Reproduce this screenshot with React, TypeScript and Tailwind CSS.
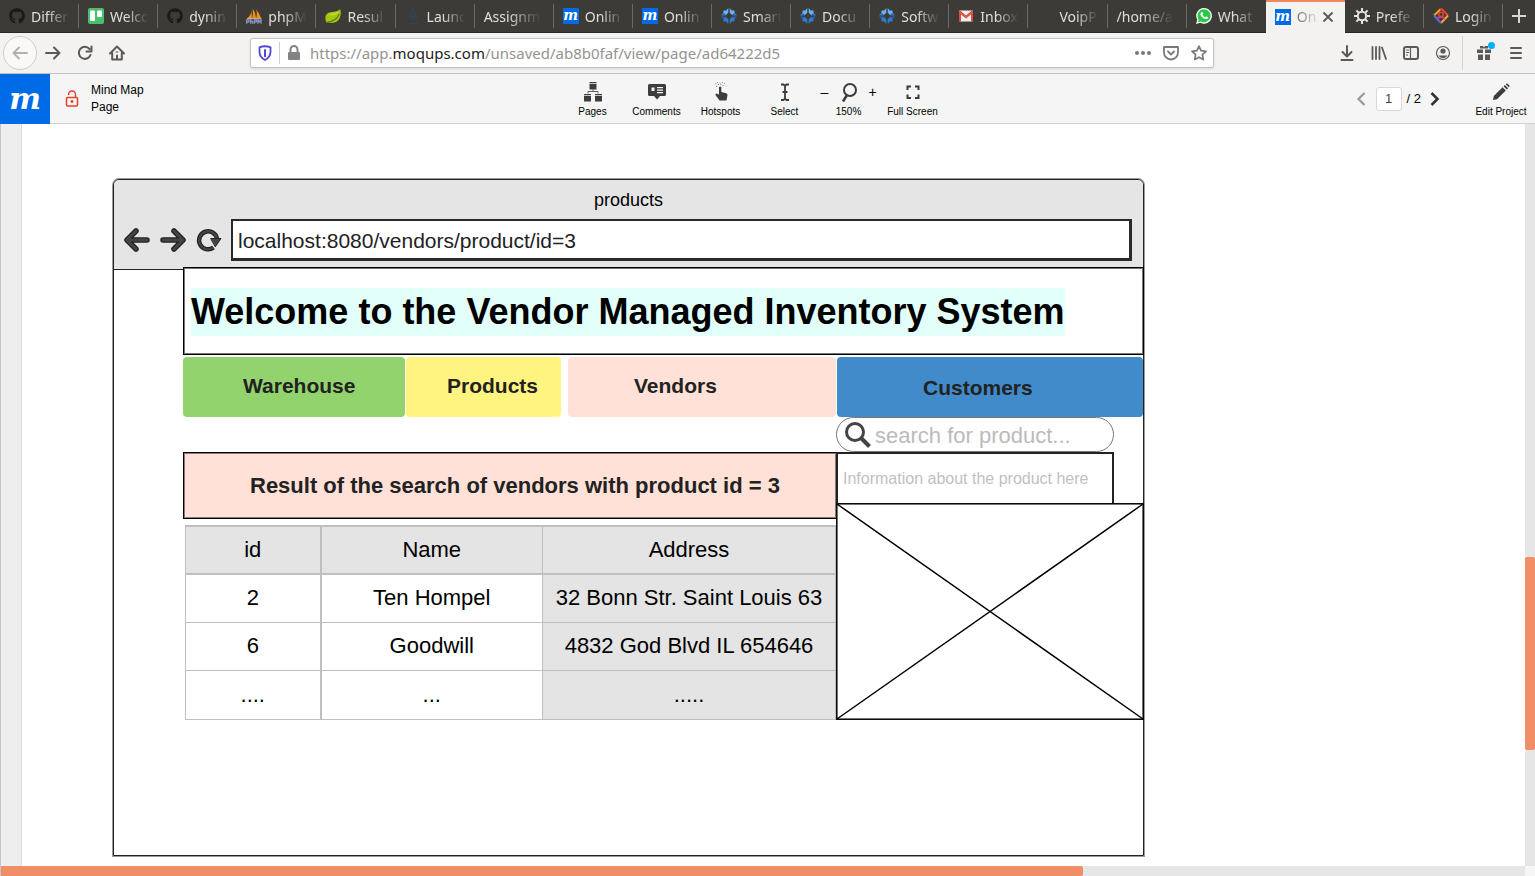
import type { ReactNode } from "react";
import { FaGithub } from "react-icons/fa";

type Kids = { children: ReactNode };

/* ---------- tab icons ---------- */

function MoqupsIcon() {
  return (
    <span className="flex size-4 items-center justify-center bg-[#006be6] pb-[2px] font-['DejaVu_Serif',serif] text-[14px] leading-none font-bold text-white italic">
      m
    </span>
  );
}

function TrelloIcon() {
  return (
    <svg viewBox="0 0 16 16" className="size-4">
      <rect width="16" height="16" rx="2" fill="#4bbf6b" />
      <rect x="2" y="2.5" width="5" height="10.5" rx="1" fill="#fff" />
      <rect x="9" y="2.5" width="5" height="6.5" rx="1" fill="#fff" />
    </svg>
  );
}

function PhpMyAdminIcon() {
  return (
    <svg viewBox="0 0 16 16" className="size-4">
      <path d="M1.500 10Q5 7 5.500 2.500L6 10zM6.300 10Q7.500 4 6.500.5 9.500 4 10 10zM10.300 10Q11.500 5 10 1.500q3.500 3.500 5 8.500z" fill="#f29111" />
      <path d="M1 10.700h14" stroke="#c9c9d8" strokeWidth="1" />
      <path d="M.7 15.800v-4h2.300v2H.7M4.700 11v4.800M4.700 13.500h2v2.300M8.500 15.800v-4h2v2h-2M12 15.800v-4l1.500 2 1.500-2v4" fill="none" stroke="#8f93bd" strokeWidth="1.300" />
    </svg>
  );
}

function SpringIcon() {
  return (
    <svg viewBox="0 0 16 16" className="size-4">
      <path d="M15.200 1C16.500 6 15.500 12 11 14c-3 1.300-6.500 1.200-9.500.5C-.5 11 0 6 4 4.600 8 3.200 12.500 4.300 15.200 1z" fill="#a3c614" />
      <path d="M1.500 14.300C7 14 12 11.500 14.300 6" stroke="#5f7d0d" fill="none" strokeWidth="1.200" />
      <path d="M3 7c3-2 8-1 11-4-1 4-6 5-11 4z" fill="#c3dc34" />
    </svg>
  );
}

function RocketIcon() {
  return (
    <svg viewBox="0 0 16 16" className="size-4" fill="none" stroke="#34455a" strokeWidth="1.200">
      <path d="M8 .8C6 2.500 5.500 5 5.800 8.500h4.400C10.500 5 10 2.500 8 .8zM5.600 6.500 4 9.500l2 .5M10.400 6.500 12 9.500l-2 .5M8 9v3M4 15.300h8" />
      <circle cx="8" cy="5" r="1" />
    </svg>
  );
}

function CompassIcon() {
  return (
    <svg viewBox="0 0 16 16" className="size-4">
      <path d="M7.300 0v4.700L4.700 7.300H0L2.500 5.200V2.500h2.700zM8.700 0v4.700l2.600 2.600H16l-2.500-2.100V2.500h-2.700z" fill="#66b3fb" />
      <path d="M7.300 16v-4.700L4.700 8.700H0l2.500 2.100v2.700h2.700zM8.700 16v-4.700l2.600-2.600H16l-2.500 2.100v2.700h-2.700z" fill="#2f7dca" />
      <path d="M0 7.300h4.700L3.600 5.500zM16 7.300h-4.700l1.100-1.800zM0 8.700h4.700l-1.100 1.800zM16 8.700h-4.700l1.100 1.800z" fill="#1d5ca8" />
    </svg>
  );
}

function GmailIcon() {
  return (
    <svg viewBox="0 0 16 16" className="size-4">
      <rect x="1" y="2.500" width="14" height="11" rx="1" fill="#f1f1f1" />
      <path d="M1 13.500V3.500L8 9l7-5.500v10h-2V6.500L8 10.500l-5-4v7z" fill="#e04a3f" />
      <path d="M1 3.500 2 2.500 8 7.500l6-5 1 1L8 9z" fill="#d23f31" />
    </svg>
  );
}

function WhatsAppIcon() {
  return (
    <svg viewBox="0 0 16 16" className="size-4">
      <path d="M8.200 0a7.800 7.800 0 1 1-3.700 14.700L0 16l1.300-4.300A7.800 7.800 0 0 1 8.200 0z" fill="#fff" />
      <path d="M8.200 1.300a6.500 6.500 0 1 1-3.400 12.100l-2.900.8.8-2.800A6.500 6.500 0 0 1 8.200 1.300z" fill="#25c942" />
      <path d="M5.500 4.200c.5-.4 1-.3 1.200.2l.5 1.200c.1.400-.5.900-.6 1.200.6 1.200 1.500 2 2.700 2.500.4-.2.800-1 1.200-.8l1.400.7c.4.200.1 1.200-.3 1.600-.8.700-2 .5-3.200 0-1.800-.8-3.100-2.300-3.800-3.900-.4-1.100.1-2.100.9-2.700z" fill="#fff" />
    </svg>
  );
}

function GearIcon() {
  return (
    <svg viewBox="0 0 16 16" className="size-4" fill="none" stroke="#e6e3de">
      <circle cx="8" cy="8" r="4.200" strokeWidth="2" />
      <path d="M8 0v3.500M8 12.500V16M0 8h3.500M12.500 8H16M2.400 2.400l2.400 2.400M11.200 11.200l2.400 2.400M13.600 2.400l-2.400 2.400M4.800 11.200l-2.400 2.400" strokeWidth="2" />
    </svg>
  );
}

function LoginIcon() {
  return (
    <svg viewBox="0 0 16 16" className="size-4" fill="none" strokeWidth="2">
      <path d="M1 7.500 7.500 1.200" stroke="#f5a21b" />
      <path d="M7 1.200h2l6 6.300" stroke="#ee4035" />
      <path d="M15 7.500 8 15" stroke="#f7a52c" />
      <path d="M1 7.500 8 15" stroke="#4b6fe0" />
      <circle cx="8" cy="6.500" r="2.200" stroke="#ee4035" strokeWidth="1.500" />
      <path d="M5 11.500V9.700l3-1.200 3 1.200v1.800" stroke="#d8417d" strokeWidth="1.500" />
    </svg>
  );
}

const github = <FaGithub className="size-4 text-[#1b1a19]" />;

const tabs: { label: string; icon?: ReactNode; active?: boolean }[] = [
  { label: "Differ", icon: github },
  { label: "Welco", icon: <TrelloIcon /> },
  { label: "dynin", icon: github },
  { label: "phpM", icon: <PhpMyAdminIcon /> },
  { label: "Resul", icon: <SpringIcon /> },
  { label: "Launc", icon: <RocketIcon /> },
  { label: "Assignm" },
  { label: "Onlin", icon: <MoqupsIcon /> },
  { label: "Onlin", icon: <MoqupsIcon /> },
  { label: "Smart", icon: <CompassIcon /> },
  { label: "Docu", icon: <CompassIcon /> },
  { label: "Softw", icon: <CompassIcon /> },
  { label: "Inbox", icon: <GmailIcon /> },
  { label: "VoipP", icon: <span className="size-4" /> },
  { label: "/home/a" },
  { label: "What", icon: <WhatsAppIcon /> },
  { label: "On", icon: <MoqupsIcon />, active: true },
  { label: "Prefe", icon: <GearIcon /> },
  { label: "Login", icon: <LoginIcon /> },
];

function TabStrip() {
  return (
    <div className="flex h-[33px] shrink-0 border-b border-[#282724] bg-[#3c3b37] text-[14px] text-[#e2ded7]">
      {tabs.map((t, i) =>
        t.active ? (
          <div key={i} className="-mb-px min-w-0 flex-1">
            <div className="flex h-full items-center border-t-2 border-[#f0865c] bg-[#f4f2f1] pr-[11px] pb-[2px] pl-[9px] text-[#77736e]">
              <span className="shrink-0">{t.icon}</span>
              <span className="ml-[6px] min-w-0 flex-1 overflow-hidden whitespace-nowrap [mask-image:linear-gradient(to_right,black,transparent)]">
                {t.label}
              </span>
              <button aria-label="Close tab" className="shrink-0">
                <svg viewBox="0 0 12 12" className="size-3" stroke="#5a5855" strokeWidth="1.800" fill="none">
                  <path d="M1.500 1.500l9 9M10.500 1.500l-9 9" />
                </svg>
              </button>
            </div>
          </div>
        ) : (
          <div key={i} className="flex min-w-0 flex-1 items-center py-[5px]">
            <button className="flex min-w-0 flex-1 items-center gap-[6px] pr-[2px] pl-[9px] text-left">
              {t.icon && <span className="flex shrink-0">{t.icon}</span>}
              <span className="min-w-0 flex-1 overflow-hidden whitespace-nowrap [mask-image:linear-gradient(to_right,black_35%,transparent_85%)]">
                {t.label}
              </span>
            </button>
            {!tabs[i + 1]?.active && <span className="h-6 w-px bg-[#6b6a65]" />}
          </div>
        ),
      )}
      <button aria-label="New tab" className="flex w-8 items-center justify-center">
        <svg viewBox="0 0 16 16" className="size-4" stroke="#d9d6d0" strokeWidth="2">
          <path d="M8 1v14M1 8h14" />
        </svg>
      </button>
    </div>
  );
}

/* ---------- browser navigation bar ---------- */

function NavButton({ label, children }: Kids & { label: string }) {
  return (
    <button aria-label={label} className="flex size-8 shrink-0 items-center justify-center">
      <svg viewBox="0 0 16 16" className="size-4" fill="none" stroke="#5b5957" strokeWidth="2" strokeLinecap="round" strokeLinejoin="round">
        {children}
      </svg>
    </button>
  );
}

function NavigationBar() {
  return (
    <div className="flex h-[41px] shrink-0 items-center border-b border-[#c4c2c0] bg-[#f4f2f1]">
      <div className="flex w-[250px] shrink-0 items-center pl-[3px]">
        <button aria-label="Back" className="flex size-[34px] items-center justify-center rounded-full border border-[#cfcdcb] bg-[#f9f8f7]">
          <svg viewBox="0 0 16 16" className="size-4" fill="none" stroke="#b3b1af" strokeWidth="2" strokeLinecap="round" strokeLinejoin="round">
            <path d="M15 8H1.500M7 2.500 1.500 8 7 13.500" />
          </svg>
        </button>
        <NavButton label="Forward">
          <path d="M1 8h13.500M9 2.500 14.500 8 9 13.500" />
        </NavButton>
        <NavButton label="Reload">
          <path d="M13.500 10A6 6 0 1 1 12.500 4M14.500 1.500v5h-5" />
        </NavButton>
        <NavButton label="Home">
          <path d="M1 8.500 8 1.500l7 7M3.200 8v6.500h9.600V8M8 14v-3.500" />
          <path d="M7 7h2" strokeWidth="1" />
        </NavButton>
      </div>

      <div className="flex h-[30px] min-w-0 flex-1 items-center rounded-[3px] border border-[#c6c3c0] bg-white shadow-sm">
        <svg viewBox="0 0 16 16" className="ml-[6px] size-4 shrink-0" fill="none">
          <path d="M2.500 2.300Q8 .2 13.500 2.300V7c0 3.500-2 6-5.500 8-3.500-2-5.500-4.500-5.500-8z" stroke="#5348d6" strokeWidth="1.800" />
          <path d="M8 4.300v7.700" stroke="#5348d6" strokeWidth="2" />
        </svg>
        <span className="ml-[6px] h-[22px] w-px shrink-0 bg-[#cfcdcb]" />
        <svg viewBox="0 0 16 16" className="ml-[6px] size-4 shrink-0">
          <path d="M4.500 8V4.500a3.500 3.500 0 0 1 7 0V8" fill="none" stroke="#858381" strokeWidth="2" />
          <rect x="2" y="7" width="12" height="8" rx="1" fill="#858381" />
        </svg>
        <div className="ml-[8px] min-w-0 flex-1 truncate text-[15px] text-[#96938f]">
          https://app.<span className="text-[#1c1b1a]">moqups.com</span>/unsaved/ab8b0faf/view/page/ad64222d5
        </div>
        <div className="flex items-center gap-3 pr-[6px]">
          <button aria-label="Page actions">
            <svg viewBox="0 0 16 16" className="size-4" fill="#7b7977">
              <circle cx="2" cy="8" r="2" /><circle cx="8" cy="8" r="2" /><circle cx="14" cy="8" r="2" />
            </svg>
          </button>
          <button aria-label="Save to Pocket">
            <svg viewBox="0 0 16 16" className="size-4" fill="none" stroke="#7b7977" strokeWidth="1.800" strokeLinecap="round" strokeLinejoin="round">
              <path d="M1 2h14v5.500a7 7 0 0 1-14 0zM5 6.500l3 3 3-3" />
            </svg>
          </button>
          <button aria-label="Bookmark">
            <svg viewBox="0 0 16 16" className="size-4" fill="none" stroke="#7b7977" strokeWidth="1.700" strokeLinejoin="round">
              <path d="M8 1.200l2.100 4.500 4.900.6-3.600 3.400.9 4.900L8 12.200l-4.300 2.400.9-4.900L1 6.300l4.900-.6z" />
            </svg>
          </button>
        </div>
      </div>

      <div className="flex w-[321px] shrink-0 items-center justify-end pr-[3px]">
        <NavButton label="Downloads">
          <path d="M8 1v10M3.500 7 8 11.500 12.500 7M2.500 15h11" />
        </NavButton>
        <NavButton label="Library">
          <path d="M1.500 2v12M5 2v12M8.500 2v12M11 2.500l4 11.500" strokeWidth="1.800" />
        </NavButton>
        <NavButton label="Sidebars">
          <rect x="1" y="2" width="14" height="12" rx="2" />
          <path d="M7.500 2v12M3.500 5h2M3.500 7.500h2M3.500 10h1" strokeWidth="1.200" />
        </NavButton>
        <NavButton label="Account">
          <circle cx="8" cy="8" r="6.500" strokeWidth="1.200" />
          <circle cx="8" cy="6" r="2.600" fill="#5b5957" stroke="none" />
          <path d="M3.500 10.500h9A5.500 5.500 0 0 1 8 13.200a5.500 5.500 0 0 1-4.500-2.700z" fill="#5b5957" stroke="none" />
        </NavButton>
        <span className="mr-[5px] ml-[3px] h-[34px] w-px bg-[#d6d4d2]" />
        <button aria-label="What's new" className="relative flex size-8 items-center justify-center">
          <svg viewBox="0 0 16 16" className="size-4" fill="#5b5957">
            <path d="M1 4.500h6v3.500H1zM9 4.500h6v3.500H9zM2 9.500h5V15H2zM9 9.500h5V15H9zM4 1h3l1 1.500L9 1h3v2.500H4z" />
          </svg>
          <span className="absolute top-[5px] right-[5px] size-[7px] rounded-full bg-[#00b0ff]" />
        </button>
        <NavButton label="Menu">
          <path d="M3 3h10M3 8h10M3 13h10" />
        </NavButton>
      </div>
    </div>
  );
}

/* ---------- application toolbar ---------- */

function Tool({ label, children }: Kids & { label: string }) {
  return (
    <button className="flex w-16 flex-col items-center whitespace-nowrap">
      <svg viewBox="0 0 20 20" className="size-5" fill="#3d3d3d">
        {children}
      </svg>
      <span className="mt-[3px] text-[10px] leading-[14px]">{label}</span>
    </button>
  );
}

function AppToolbar() {
  return (
    <div className="flex h-[50px] shrink-0 border-b border-[#d2d2d2] bg-[#f5f5f5] font-['Liberation_Sans',Arial,sans-serif] text-black">
      <div className="flex min-w-0 flex-1 items-center">
        <a href="#home" aria-label="Moqups" className="flex size-[50px] items-center justify-center bg-[#006be6] font-['DejaVu_Serif',serif] text-[30px] leading-none font-bold text-white italic">
          m
        </a>
        <svg viewBox="0 0 14 18" className="ml-[15px] h-[18px] w-[14px]" fill="none" stroke="#e2432a" strokeWidth="1.500">
          <rect x="1.500" y="7.500" width="11" height="8.500" rx="1" />
          <path d="M3.500 5V4.500a3.500 3.500 0 0 1 7 0v3" />
          <circle cx="7" cy="11.500" r="1.400" fill="#e2432a" stroke="none" />
        </svg>
        <h1 className="ml-3 w-16 text-[12px] leading-[17px]">Mind Map Page</h1>
      </div>

      <div className="flex items-start pt-2 pr-[28px]">
        <Tool label="Pages">
          <path d="M6.500 0h7v1.200h-7zM6.500 2h7v5.500h-7zM1 12h7v1.200H1zM1 14h7v5.500H1zM12 12h7v1.200h-7zM12 14h7v5.500h-7z" />
          <path d="M10 7.500v2M5 11.500v-2h10v2" fill="none" stroke="#3d3d3d" strokeWidth=".8" />
        </Tool>
        <Tool label="Comments">
          <path d="M2.500 2h15q1.500 0 1.500 1.500v9q0 1.500-1.500 1.500H13l-3 3.500L7 14H2.500Q1 14 1 12.500v-9Q1 2 2.500 2z" />
          <path d="M4.500 5.500h3v3.500h-3zM10 5h6v1.200h-6zM10 7.500h6v1.200h-6zM10 10h6v1.200h-6z" fill="#f5f5f5" />
        </Tool>
        <Tool label="Hotspots">
          <path d="M8 5q1.200-1 2.300 0v5l5 1.200q1.200.4 1.200 1.800l-1 5.500H8.500L4.500 13q0-1.800 1.500-1.500l2 1.300z" />
          <path d="M5.500 4.800A3.800 3.800 0 0 1 12.800 4.800M4.200 2.200A6 6 0 0 1 14 2.200" fill="none" stroke="#3d3d3d" strokeDasharray="1 1.500" />
        </Tool>
        <Tool label="Select">
          <path d="M6 2.500h2.500L10 4l1.500-1.500H14M6 18h2.500L10 16.500l1.500 1.500H14M10 4v12.500M7.500 10h5" fill="none" stroke="#3d3d3d" strokeWidth="1.800" />
        </Tool>
        <div className="flex w-16 items-start justify-center gap-[2px]">
          <button aria-label="Zoom out" className="w-3 text-[14px] leading-[20px]">–</button>
          <div className="flex w-8 flex-col items-center">
            <svg viewBox="0 0 20 20" className="size-5" fill="none" stroke="#3d3d3d">
              <circle cx="11" cy="8" r="6" strokeWidth="2" />
              <path d="M8 13 4 19.500" strokeWidth="2.500" />
            </svg>
            <span className="mt-[3px] text-[10px] leading-[14px]">150%</span>
          </div>
          <button aria-label="Zoom in" className="w-3 text-[14px] leading-[20px]">+</button>
        </div>
        <Tool label="Full Screen">
          <path d="M4.500 8V4.500H8M12 4.500h3.500V8M15.500 12.500V16H12M8 16H4.500v-3.500" fill="none" stroke="#3d3d3d" strokeWidth="2" />
        </Tool>
      </div>

      <div className="flex min-w-0 flex-1 items-center justify-end pr-[2px]">
        <button aria-label="Previous page">
          <svg viewBox="0 0 10 16" className="h-4 w-[10px]" fill="none" stroke="#999" strokeWidth="2.200">
            <path d="M8.500 2 2.500 8l6 6" />
          </svg>
        </button>
        <input aria-label="Page number" defaultValue="1" className="ml-[10px] h-6 w-[26px] rounded-[3px] border border-[#d8d8d8] bg-white text-center text-[13px] text-[#444]" />
        <span className="ml-[5px] text-[13px]">/ 2</span>
        <button aria-label="Next page" className="ml-[9px]">
          <svg viewBox="0 0 10 16" className="h-4 w-[10px]" fill="none" stroke="#333" strokeWidth="2.600">
            <path d="M1.500 2l6 6-6 6" />
          </svg>
        </button>
        <button className="ml-[29px] flex w-16 flex-col items-center self-start pt-2 whitespace-nowrap">
          <svg viewBox="0 0 20 20" className="size-5" fill="#3d3d3d">
            <path d="M2 18l.8-4L11.500 5.300l3.300 3.300L6 17.300zM12.500 4.300l1.300-1.300 3.300 3.300-1.300 1.300zM14.800 2.200l.5-.5q.7-.4 1.300.1l1.700 1.700q.5.600 0 1.200l-.5.500z" />
          </svg>
          <span className="mt-[3px] text-[10px] leading-[14px]">Edit Project</span>
        </button>
      </div>
    </div>
  );
}

/* ---------- wireframe ---------- */

function Sketch({ children }: Kids) {
  return (
    <svg viewBox="0 0 28 26" className="h-[26px] w-7 shrink-0" fill="none" strokeLinecap="round" strokeLinejoin="round">
      {children}
    </svg>
  );
}

const arrowLeft = "M24 13H4.500M13 4 4 13l9 9";
const arrowRight = "M4 13h19.500M15 4l9 9-9 9";

function WireframeHeader() {
  return (
    <div className="h-[90px] rounded-t-[6px] border-b border-[#222] bg-[#e5e5e5]">
      <p className="pt-2 text-center text-[18px] leading-6 text-black">products</p>
      <div className="mt-[7px] flex items-center gap-2 pr-[11px] pl-[9px]">
        <Sketch>
          <path d={arrowLeft} stroke="#222" strokeWidth="5.500" />
          <path d={arrowLeft} stroke="#444" strokeWidth="3" />
        </Sketch>
        <Sketch>
          <path d={arrowRight} stroke="#222" strokeWidth="5.500" />
          <path d={arrowRight} stroke="#444" strokeWidth="3" />
        </Sketch>
        <Sketch>
          <path d="M18.500 20.500A9 9 0 1 1 22 12" stroke="#222" strokeWidth="4.500" strokeLinecap="butt" />
          <path d="M18.500 20.500A9 9 0 1 1 22 12" stroke="#444" strokeWidth="2" strokeLinecap="butt" />
          <path d="M16 11.500h10l-5.500 8z" fill="#444" stroke="#222" />
        </Sketch>
        <input
          aria-label="Location"
          defaultValue="localhost:8080/vendors/product/id=3"
          className="h-[42px] min-w-0 flex-1 border-2 border-r-[3px] border-b-[3px] border-[#2b2a2a] bg-white pt-[2px] pl-[5px] text-[21px] text-[#222]"
        />
      </div>
    </div>
  );
}

const rows = [
  ["2", "Ten Hompel", "32 Bonn Str. Saint Louis 63"],
  ["6", "Goodwill", "4832 God Blvd IL 654646"],
  ["....", "...", "....."],
];

function VendorTable() {
  return (
    <table className="mt-[6px] ml-[2px] w-[calc(100%-2px)] table-fixed border-collapse text-center text-[22px] leading-6 text-black">
      <colgroup>
        <col className="w-[135px]" />
        <col className="w-[222px]" />
        <col />
      </colgroup>
      <thead>
        <tr className="h-[48px] bg-[#e4e4e4]">
          {["id", "Name", "Address"].map((h) => (
            <th key={h} className="border border-t-2 border-b-2 border-[#bfbfbf] p-0 font-normal first:border-r-2">{h}</th>
          ))}
        </tr>
      </thead>
      <tbody>
        {rows.map((r) => (
          <tr key={r[1]} className="h-[48px] last:h-[49px]">
            <td className="border border-r-2 border-[#bfbfbf] p-0">{r[0]}</td>
            <td className="border border-[#bfbfbf] p-0">{r[1]}</td>
            <td className="border border-[#bfbfbf] bg-[#e4e4e4] p-0 whitespace-nowrap">{r[2]}</td>
          </tr>
        ))}
      </tbody>
    </table>
  );
}

function Wireframe() {
  return (
    <div className="flex h-[677px] w-full max-w-[1031px] flex-col rounded-t-[6px] border border-[#222] font-['Liberation_Sans',Arial,sans-serif] shadow-[0_0_0_1px_#9a9a9a]">
      <WireframeHeader />
      <div className="-mt-[3px] -mr-px ml-[69px]">
        <div className="flex h-[88px] items-center border border-black bg-white pt-[2px] pl-[7px] shadow-[inset_0_0_0_1px_#777]">
          <h2 className="bg-[#e2fff9] text-[36px] leading-[48px] font-bold whitespace-nowrap text-black">
            Welcome to the Vendor Managed Inventory System
          </h2>
        </div>

        <nav className="mt-[2px] mr-px flex h-[60px] text-[21px] font-bold text-[#222]">
          <a href="#warehouse" className="flex w-[222px] items-center rounded-[4px] bg-[#92d36e] pb-[2px] pl-[60px]">Warehouse</a>
          <a href="#products" className="ml-px flex w-[155px] items-center rounded-[4px] bg-[#fff47f] pb-[2px] pl-[41px]">Products</a>
          <a href="#vendors" className="ml-[7px] flex w-[268px] items-center rounded-[4px] bg-[#ffe1d7] pb-[2px] pl-[66px]">Vendors</a>
          <a href="#customers" className="ml-px flex min-w-0 flex-1 items-center rounded-[4px] bg-[#418bca] pt-[2px] pl-[86px]">Customers</a>
        </nav>

        <div className="grid grid-cols-[minmax(0,653fr)_minmax(0,308fr)]">
          <div className="pt-[35px]">
            <h3 className="flex h-[67px] items-center border border-r-0 border-black bg-[#ffe1d7] pl-[66px] text-[22px] font-bold whitespace-nowrap text-[#222] shadow-[inset_0_0_0_1px_#8a7a75]">
              Result of the search of vendors with product id = 3
            </h3>
            <VendorTable />
          </div>

          <div>
            <div className="mr-[30px] flex h-[35px] items-center rounded-full border border-[#777] bg-white pt-px pl-[7px]">
              <svg viewBox="0 0 28 28" className="size-7 shrink-0" fill="none" stroke="#444">
                <circle cx="11" cy="11" r="8.500" strokeWidth="3" />
                <path d="M17 17 25.500 25.500" strokeWidth="4" />
              </svg>
              <input aria-label="Search for product" placeholder="search for product..." className="ml-[3px] min-w-0 flex-1 text-[22px] placeholder:text-[#bbb]" />
            </div>
            <div className="mr-[30px] flex h-[51px] items-center border-2 border-b-0 border-[#222] bg-white pl-[5px] text-[16px] whitespace-nowrap text-[#bfbfbf]">
              Information about the product here
            </div>
            <svg viewBox="0 0 308 217" preserveAspectRatio="none" className="block h-[217px] w-full" fill="#fff" stroke="#000" strokeWidth="1.500">
              <rect x=".8" y=".8" width="306.400" height="215.400" />
              <path d="M1 1l306 215M307 1 1 216" />
            </svg>
          </div>
        </div>
      </div>
    </div>
  );
}

export default function App() {
  return (
    <div className="flex h-screen flex-col overflow-hidden bg-white font-['Noto_Sans',sans-serif]">
      <TabStrip />
      <NavigationBar />
      <AppToolbar />
      <main className="flex min-h-0 flex-1">
        <div className="flex min-w-0 flex-1 flex-col border-l border-[#c8c8c8]">
          <div className="flex min-h-0 flex-1 overflow-hidden">
            <div className="w-[21px] shrink-0 border-r border-[#dcdcdc] bg-[#eee]" />
            <div className="min-w-0 flex-1 pt-[55px] pl-[91px]">
              <Wireframe />
            </div>
          </div>
          <div className="h-[10px] shrink-0 bg-[#e6e6e6]">
            <div className="h-full w-[71%] rounded-r-[2px] bg-[#f08e68]" />
          </div>
        </div>
        <div className="flex w-[10px] shrink-0 flex-col bg-[#e6e6e6]">
          <div className="grow-[433]" />
          <div className="grow-[193] rounded-[2px] bg-[#f08e68]" />
          <div className="grow-[116]" />
          <div className="h-[10px] bg-[#f7f6f5]" />
        </div>
      </main>
    </div>
  );
}
